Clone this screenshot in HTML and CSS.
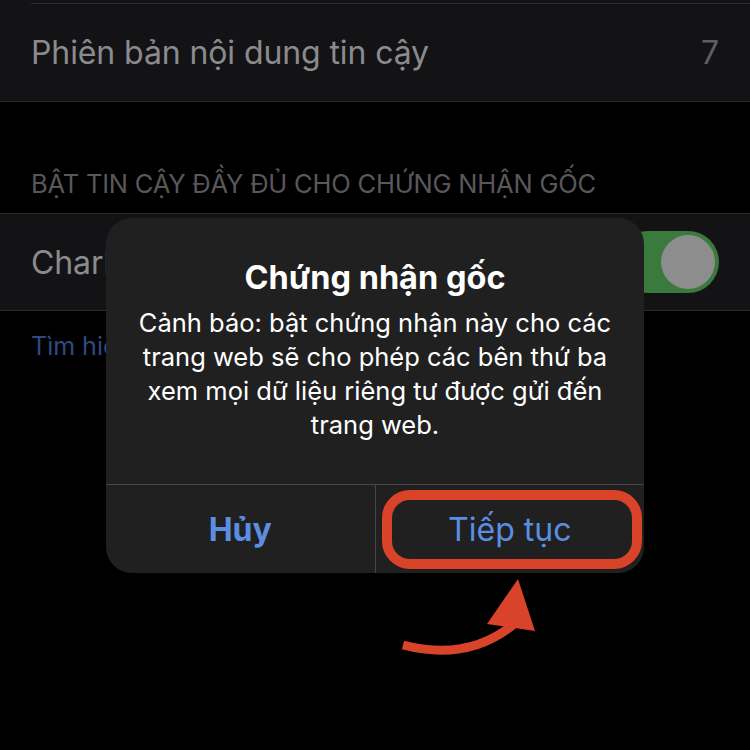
FILE: index.html
```html
<!DOCTYPE html>
<html lang="vi">
<head>
<meta charset="utf-8">
<link rel="stylesheet" href="styles.css">
</head>
<body>
<div class="screen">
  <div class="group">
    <div class="stub"></div>
    <div class="cell">
      <div class="cell-body">
        <span class="cell-label">Phiên bản nội dung tin cậy</span>
        <span class="cell-value">7</span>
      </div>
    </div>
  </div>

  <div class="section-header">BẬT TIN CẬY ĐẦY ĐỦ CHO CHỨNG NHẬN GỐC</div>

  <div class="group group-second">
    <div class="cell">
      <div class="cell-body cell-body-plain">
        <span class="cell-label">Charles Proxy CA</span>
        <span class="toggle"><span class="knob"></span></span>
      </div>
    </div>
  </div>

  <div class="footer-link">Tìm hiểu thêm về chứng nhận tin cậy</div>

  <div class="alert">
    <div class="alert-content">
      <div class="alert-title">Chứng nhận gốc</div>
      <div class="alert-message">Cảnh báo: bật chứng nhận này cho các<br>trang web sẽ cho phép các bên thứ ba<br>xem mọi dữ liệu riêng tư được gửi đến<br>trang web.</div>
    </div>
    <div class="alert-actions">
      <div class="alert-btn alert-btn-cancel">Hủy</div>
      <div class="alert-btn alert-btn-ok">Tiếp tục</div>
    </div>
    <div class="highlight"></div>
  </div>

  <svg class="arrow" width="750" height="750" viewBox="0 0 750 750">
    <path d="M403 645 Q468 662 514 624" fill="none" stroke="#d8432a" stroke-width="9"/>
    <polygon points="518,579 487,624 535,631" fill="#d8432a"/>
  </svg>
</div>
</body>
</html>
```

FILE: styles.css
```css
* { box-sizing: border-box; }
html, body {
  margin: 0;
  padding: 0;
  background: #000;
}
body {
  width: 750px;
  height: 750px;
  overflow: hidden;
  font-family: Inter, "Noto Sans", sans-serif;
}
.screen {
  position: relative;
  width: 750px;
  height: 750px;
  display: flex;
  flex-direction: column;
}
.group {
  background: #131315;
  border-bottom: 1px solid #2a2a2c;
}
.stub {
  height: 3px;
}
.cell {
  padding-left: 31px;
}
.cell-body {
  height: 98px;
  border-top: 1px solid #2a2a2c;
  display: flex;
  align-items: center;
  justify-content: space-between;
  padding-right: 31px;
}
.cell-body-plain {
  border-top: none;
  height: 96px;
}
.cell-label {
  color: #8b8b8d;
  font-size: 32px;
  letter-spacing: -0.1px;
}
.cell-value {
  color: #5e5e61;
  font-size: 32px;
}
.section-header {
  padding: 67px 31px 14px;
  line-height: 30px;
  font-size: 25.5px;
  letter-spacing: -0.2px;
  color: #58585b;
}
.group-second {
  border-top: 1px solid #2a2a2c;
}
.toggle {
  width: 102px;
  height: 62px;
  border-radius: 31px;
  background: #3a7a3d;
  display: flex;
  align-items: center;
  justify-content: flex-end;
  padding-right: 4px;
}
.knob {
  width: 54px;
  height: 54px;
  border-radius: 50%;
  background: #8d8d8d;
}
.footer-link {
  padding: 20px 31px 0;
  line-height: 30px;
  font-size: 25px;
  color: #2c4b82;
}
.alert {
  position: absolute;
  left: 106px;
  top: 218px;
  width: 538px;
  height: 355px;
  background: #202020;
  border-radius: 26px;
  display: flex;
  flex-direction: column;
}
.alert-content {
  padding: 40px 10px 0;
  height: 267px;
  border-bottom: 1px solid #474747;
  text-align: center;
}
.alert-title {
  color: #fff;
  font-weight: 700;
  font-size: 32.5px;
  line-height: 40px;
  margin-bottom: 8px;
}
.alert-message {
  color: #fff;
  font-size: 25.5px;
  line-height: 34px;
}
.alert-actions {
  flex: 1;
  display: flex;
}
.alert-btn {
  flex: 1;
  display: flex;
  align-items: center;
  justify-content: center;
  color: #5b8ee0;
  font-size: 32px;
}
.alert-btn-cancel {
  font-weight: 700;
  border-right: 1px solid #474747;
}
.highlight {
  position: absolute;
  left: 276px;
  top: 272px;
  width: 260px;
  height: 79px;
  border: 10px solid #d8432a;
  border-radius: 28px;
}
.arrow {
  position: absolute;
  left: 0;
  top: 0;
  pointer-events: none;
}
```
